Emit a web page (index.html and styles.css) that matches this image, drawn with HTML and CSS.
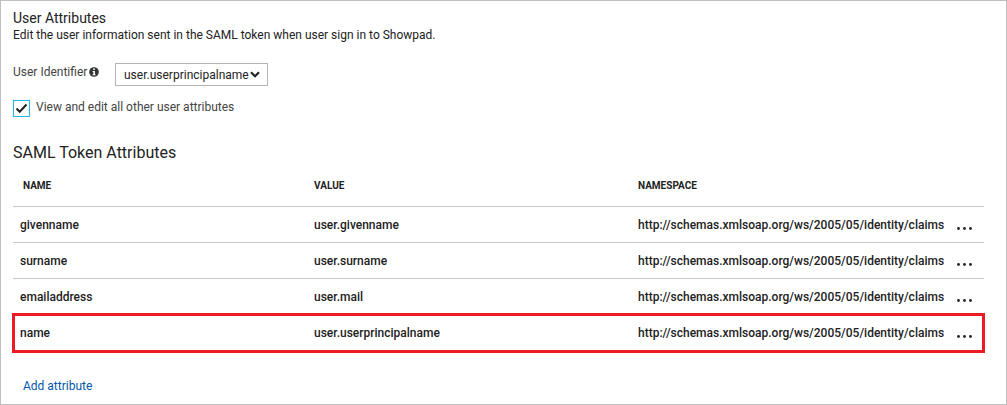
FILE: index.html
```html
<!DOCTYPE html>
<html lang="en">
<head>
<meta charset="utf-8">
<title>User Attributes</title>
<link rel="stylesheet" href="styles.css">
</head>
<body>
<main class="panel">
  <header class="intro">
    <h1 class="panel-title">User Attributes</h1>
    <p class="panel-text">Edit the user information sent in the SAML token when user sign in to Showpad.</p>
  </header>

  <div class="field">
    <label class="field-label identifier-label" for="identifier">User Identifier
      <svg class="info" viewBox="0 0 10 10" aria-hidden="true"><circle cx="5" cy="5" r="4.8" fill="#333"/><path d="M4.2 1.6h1.7v1.5H4.2zM3.6 4h2.3v3.2h.7v1H3.5v-1h.8V5h-.7z" fill="#fff"/></svg>
    </label>
    <span class="picker">
      <select class="picker-select" id="identifier"><option>user.userprincipalname</option></select>
      <svg class="chevron" viewBox="0 0 10 7" aria-hidden="true"><path d="M1 1.2l4 4 4-4" fill="none" stroke="#222" stroke-width="2.2"/></svg>
    </span>
  </div>

  <div class="option">
    <input class="check" type="checkbox" id="view-all" checked>
    <label class="field-label" for="view-all">View and edit all other user attributes</label>
  </div>

  <h2 class="section-title">SAML Token Attributes</h2>
  <table class="attributes">
    <colgroup><col class="col-name"><col class="col-value"><col class="col-namespace"><col class="col-more"></colgroup>
    <thead>
      <tr><th class="first" scope="col">NAME</th><th scope="col">VALUE</th><th scope="col">NAMESPACE</th><td></td></tr>
    </thead>
    <tbody>
      <tr><td>givenname</td><td>user.givenname</td><td>http://schemas.xmlsoap.org/ws/2005/05/identity/claims</td><td><button class="more" type="button" aria-label="More"><svg class="dots" viewBox="0 0 16 3"><circle cx="1.5" cy="1.5" r="1.4"/><circle cx="7.5" cy="1.5" r="1.4"/><circle cx="13.5" cy="1.5" r="1.4"/></svg></button></td></tr>
      <tr><td>surname</td><td>user.surname</td><td>http://schemas.xmlsoap.org/ws/2005/05/identity/claims</td><td><button class="more" type="button" aria-label="More"><svg class="dots" viewBox="0 0 16 3"><circle cx="1.5" cy="1.5" r="1.4"/><circle cx="7.5" cy="1.5" r="1.4"/><circle cx="13.5" cy="1.5" r="1.4"/></svg></button></td></tr>
      <tr><td>emailaddress</td><td>user.mail</td><td>http://schemas.xmlsoap.org/ws/2005/05/identity/claims</td><td><button class="more" type="button" aria-label="More"><svg class="dots" viewBox="0 0 16 3"><circle cx="1.5" cy="1.5" r="1.4"/><circle cx="7.5" cy="1.5" r="1.4"/><circle cx="13.5" cy="1.5" r="1.4"/></svg></button></td></tr>
      <tr class="highlight"><td>name</td><td>user.userprincipalname</td><td>http://schemas.xmlsoap.org/ws/2005/05/identity/claims</td><td><button class="more" type="button" aria-label="More"><svg class="dots" viewBox="0 0 16 3"><circle cx="1.5" cy="1.5" r="1.4"/><circle cx="7.5" cy="1.5" r="1.4"/><circle cx="13.5" cy="1.5" r="1.4"/></svg></button></td></tr>
    </tbody>
  </table>
  <a class="add" href="#">Add attribute</a>
</main>
</body>
</html>
```
FILE: styles.css
```css
* { box-sizing: border-box; }
body {
  margin: 0;
  background: #fff;
  color: #222;
  font: 12px/16px Roboto, "Open Sans", sans-serif;
}
.panel {
  min-height: 100vh;
  padding: 8px 22px 8px 12px;
  border: 1px solid #bfbfbf;
}
.panel-title { margin: 0; font-size: 14px; font-weight: 400; line-height: 18px; }
.panel-text { margin: 0; }
.field { display: flex; align-items: flex-start; margin-top: 20px; }
.field-label { color: #444; }
.identifier-label { display: flex; align-items: center; gap: 2px; width: 102px; padding-top: 1px; }
.info { width: 10px; height: 10px; }
.picker { display: grid; align-items: center; width: 153px; }
.picker-select {
  grid-area: 1 / 1;
  width: 100%;
  height: 23px;
  padding: 0 8px;
  border: 1px solid #b3b3b3;
  border-radius: 0;
  background: #fff;
  color: #222;
  font: inherit;
  appearance: none;
}
.chevron { grid-area: 1 / 1; justify-self: end; width: 10px; height: 7px; margin-right: 8px; pointer-events: none; }
.option { display: flex; align-items: flex-start; gap: 6px; margin-top: 13px; }
.check {
  flex: none;
  width: 17px;
  height: 17px;
  margin: 1px 0 0;
  border: 1px solid #26b6ee;
  background: #fff url("data:image/svg+xml,%3Csvg xmlns='http://www.w3.org/2000/svg' viewBox='0 0 15 15'%3E%3Cpath d='M2.5 7.5l3.2 3.2 6.8-7.2' fill='none' stroke='%23222' stroke-width='2'/%3E%3C/svg%3E");
  appearance: none;
}
.section-title { margin: 26px 0 0; font-size: 16px; font-weight: 400; line-height: 20px; }
.attributes { width: 100%; table-layout: fixed; border-collapse: collapse; }
.col-name { width: 301px; }
.col-value { width: 324px; }
.col-more { width: 28px; }
.attributes th { height: 43px; padding: 4px 0 0; font-size: 10px; font-weight: 700; text-align: left; }
.attributes th.first { padding-left: 10px; }
.attributes tr { border-bottom: 1px solid #c8c8c8; }
.attributes tbody td { height: 36px; padding: 2px 0 0; font-weight: 500; white-space: nowrap; }
.attributes tbody td:first-child { padding-left: 7px; }
.attributes .highlight { border: 0; outline: 3px solid #ed1c24; outline-offset: -2px; }
.attributes .highlight td { height: 38px; padding-bottom: 2px; }
.more { display: block; padding: 6px 0 0 1px; border: 0; background: none; }
.dots { display: block; width: 16px; height: 3px; fill: #222; }
.add { display: inline-block; margin: 26px 0 0 10px; color: #0058ad; text-decoration: none; }
```
